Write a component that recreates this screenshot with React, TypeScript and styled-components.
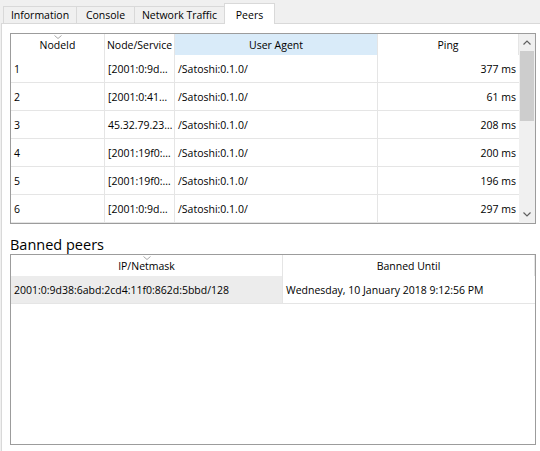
import React from 'react'
import styled, { createGlobalStyle } from 'styled-components'

const GlobalStyle = createGlobalStyle`
  html, body {
    margin: 0;
    padding: 0;
    background: #f0f0f0;
  }
  * {
    box-sizing: border-box;
  }
`

const Window = styled.div`
  width: 540px;
  height: 451px;
  overflow: hidden;
  padding-left: 1px;
  background: #f0f0f0;
  font-family: 'Open Sans', 'Liberation Sans', Arial, sans-serif;
  font-size: 10.5px;
  color: #000;
`

const TabBar = styled.div`
  display: flex;
  align-items: flex-end;
  height: 23px;
  padding-left: 2px;
`

const Tab = styled.div<{ $width: number; $active?: boolean }>`
  display: flex;
  align-items: center;
  justify-content: center;
  width: ${(p) => p.$width}px;
  height: ${(p) => (p.$active ? 21 : 17)}px;
  margin-left: -1px;
  margin-bottom: ${(p) => (p.$active ? -1 : 0)}px;
  padding-top: ${(p) => (p.$active ? 1 : 0)}px;
  border: 1px solid #d9d9d9;
  border-bottom: none;
  background: ${(p) => (p.$active ? '#fff' : '#f0f0f0')};
  position: relative;
  z-index: ${(p) => (p.$active ? 1 : 0)};
  white-space: nowrap;

  &:first-child {
    margin-left: 0;
  }
`

const Pane = styled.div`
  height: 440px;
  background: #fff;
  border-top: 1px solid #d9d9d9;
  border-left: 1px solid #d9d9d9;
  padding: 9px 0 0 8px;
`

const Frame = styled.div`
  display: flex;
  width: 526px;
  height: 191px;
  border: 1px solid #9c9c9c;
  overflow: hidden;
  background: #fff;
`

const Grid = styled.div<{ $cols: string }>`
  flex: 1;
  display: grid;
  grid-template-columns: ${(p) => p.$cols};
  grid-auto-rows: min-content;
  align-content: start;
`

const HeadCell = styled.div<{ $hover?: boolean }>`
  position: relative;
  display: flex;
  align-items: center;
  justify-content: center;
  height: 21px;
  overflow: hidden;
  white-space: nowrap;
  border-right: 1px solid #e5e5e5;
  background: ${(p) => (p.$hover ? '#d9ebf9' : '#fff')};

  &:last-child {
    border-right: none;
  }
`

const SortMark = styled.svg`
  position: absolute;
  top: 1px;
  left: 50%;
  margin-left: -4px;
`

const Cell = styled.div<{ $align?: 'left' | 'right'; $shade?: boolean; $last?: boolean }>`
  display: flex;
  align-items: center;
  justify-content: ${(p) => (p.$align === 'right' ? 'flex-end' : 'flex-start')};
  height: 28px;
  padding: 0 3px;
  overflow: hidden;
  white-space: nowrap;
  border-bottom: 1px solid #e5e5e5;
  border-right: ${(p) => (p.$last ? 'none' : '1px solid #e5e5e5')};
  background: ${(p) => (p.$shade ? '#ececec' : '#fff')};
`

const ScrollBar = styled.div`
  display: flex;
  flex-direction: column;
  width: 17px;
  background: #f0f0f0;
`

const ArrowButton = styled.div`
  display: flex;
  align-items: center;
  justify-content: center;
  height: 17px;
  color: #606060;
`

const Track = styled.div`
  flex: 1;
  padding: 0 1px;
`

const Thumb = styled.div`
  height: 70px;
  background: #cdcdcd;
`

const SectionLabel = styled.div`
  margin-top: 12px;
  height: 18px;
  line-height: 18px;
  font-size: 14.5px;
`

const Chevron = ({ up }: { up?: boolean }) => (
  <svg width="8" height="5" viewBox="0 0 8 5">
    <polyline
      points={up ? '0.5,4.5 4,1 7.5,4.5' : '0.5,0.5 4,4 7.5,0.5'}
      fill="none"
      stroke="currentColor"
      strokeWidth="1.2"
    />
  </svg>
)

const Sort = () => (
  <SortMark width="8" height="4" viewBox="0 0 8 4">
    <polyline points="0.5,0.5 4,3.5 7.5,0.5" fill="none" stroke="#a8a8a8" strokeWidth="1" />
  </SortMark>
)

const peers = [
  { id: '1', addr: '[2001:0:9d…', agent: '/Satoshi:0.1.0/', ping: '377 ms' },
  { id: '2', addr: '[2001:0:41…', agent: '/Satoshi:0.1.0/', ping: '61 ms' },
  { id: '3', addr: '45.32.79.23…', agent: '/Satoshi:0.1.0/', ping: '208 ms' },
  { id: '4', addr: '[2001:19f0:…', agent: '/Satoshi:0.1.0/', ping: '200 ms' },
  { id: '5', addr: '[2001:19f0:…', agent: '/Satoshi:0.1.0/', ping: '196 ms' },
  { id: '6', addr: '[2001:0:9d…', agent: '/Satoshi:0.1.0/', ping: '297 ms' },
]

const tabs = [
  { label: 'Information', width: 74 },
  { label: 'Console', width: 59 },
  { label: 'Network Traffic', width: 91 },
  { label: 'Peers', width: 51, active: true },
]

export default function App() {
  return (
    <>
      <GlobalStyle />
      <Window>
        <TabBar>
          {tabs.map((t) => (
            <Tab key={t.label} $width={t.width} $active={t.active}>
              {t.label}
            </Tab>
          ))}
        </TabBar>
        <Pane>
          <Frame>
            <Grid $cols="94px 70px 203px 141px">
              <HeadCell>
                <Sort />
                NodeId
              </HeadCell>
              <HeadCell>Node/Service</HeadCell>
              <HeadCell $hover>User Agent</HeadCell>
              <HeadCell>Ping</HeadCell>
              {peers.map((p) => (
                <React.Fragment key={p.id}>
                  <Cell>{p.id}</Cell>
                  <Cell>{p.addr}</Cell>
                  <Cell>{p.agent}</Cell>
                  <Cell $align="right" $last>
                    {p.ping}
                  </Cell>
                </React.Fragment>
              ))}
            </Grid>
            <ScrollBar>
              <ArrowButton>
                <Chevron up />
              </ArrowButton>
              <Track>
                <Thumb />
              </Track>
              <ArrowButton>
                <Chevron />
              </ArrowButton>
            </ScrollBar>
          </Frame>
          <SectionLabel>Banned peers</SectionLabel>
          <Frame>
            <Grid $cols="272px 252px">
              <HeadCell>
                <Sort />
                IP/Netmask
              </HeadCell>
              <HeadCell>Banned Until</HeadCell>
              <Cell $shade>2001:0:9d38:6abd:2cd4:11f0:862d:5bbd/128</Cell>
              <Cell $last>Wednesday, 10 January 2018 9:12:56 PM</Cell>
            </Grid>
          </Frame>
        </Pane>
      </Window>
    </>
  )
}
